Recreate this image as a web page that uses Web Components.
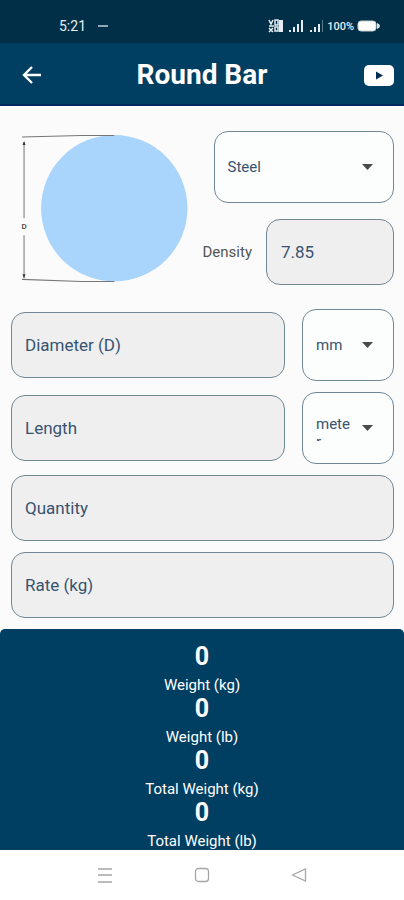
<!DOCTYPE html>
<html lang="en">
<head>
<meta charset="utf-8">
<meta name="viewport" content="width=device-width, initial-scale=1">
<title>Round Bar</title>
<style>
  body {
    margin: 0;
    font-family: Roboto, "Liberation Sans", sans-serif;
    --navy: #003e62;
    --line: #6f8796;
    --text: #38536f;
  }
</style>
</head>
<body>
<round-bar-screen></round-bar-screen>

<script>
function attach(element, html) {
  const template = document.createElement('template');
  template.innerHTML = html;
  const root = element.attachShadow({ mode: 'open' });
  root.appendChild(document.importNode(template.content, true));
  return root;
}

class StatusBar extends HTMLElement {
  constructor() {
    super();
    attach(this, `
      <style>
        :host {
          display: flex;
          align-items: center;
          justify-content: space-between;
          height: 43px;
          padding: 9px 24px 0 59px;
          box-sizing: border-box;
          background: #002f47;
          color: #e6edf1;
          font-size: 14px;
        }
        div { display: flex; align-items: center; }
        .left { gap: 12px; }
        .battery { font-size: 11px; font-weight: 500; gap: 3px; }
        .dash { width: 10px; height: 2px; background: #91a7b3; }
        svg { display: block; }
      </style>
      <div class="left"><span>5:21</span><span class="dash"></span></div>
      <div class="battery">
        <svg width="56" height="14" viewBox="0 0 56 14" fill="#e6edf1">
          <path d="M1 1l2 4 2-4M1 7h5M1 9l4 4M5 9l-4 4M7 1h3v5H7zM7 8h3v4H7z" fill="none" stroke="#e6edf1" stroke-width="1.500"/>
          <rect x="11" y="1" width="4" height="12"/>
          <path d="M21 11h2v2h-2zM25 8h2v5h-2zM29 5h2v8h-2zM33 1h2v12h-2z"/>
          <path d="M42 11h2v2h-2zM46 8h2v5h-2zM50 5h2v8h-2z"/>
          <path d="M54 1h1v12h-1z" opacity=".4"/>
        </svg>
        <span>100%</span>
        <svg width="23" height="12" viewBox="0 0 23 12">
          <rect x="1" y="1" width="18" height="10" rx="3" fill="#fff" stroke="#c5ced3"/>
          <path d="M20 3q3 1 3 3t-3 3z" fill="#dce3e6"/>
        </svg>
      </div>
    `);
  }
}

class AppBar extends HTMLElement {
  constructor() {
    super();
    attach(this, `
      <style>
        :host {
          display: grid;
          grid-template-columns: 1fr auto 1fr;
          align-items: center;
          height: 63px;
          padding: 2px 9px 0;
          box-sizing: border-box;
          background: var(--navy);
          border-bottom: 2px solid #00285a;
          color: #fff;
        }
        h1 { margin: 0; font-size: 28px; font-weight: 700; }
        button {
          display: flex;
          padding: 0;
          border: 0;
          background: none;
        }
        .back { justify-self: start; padding-left: 9px; }
        .video { justify-self: end; }
      </style>
      <button class="back" aria-label="Back">
        <svg width="28" height="28" viewBox="0 0 28 28" fill="none" stroke="#fff" stroke-width="2.400">
          <path d="M23 14H7M14 6l-8 8 8 8"/>
        </svg>
      </button>
      <h1><slot></slot></h1>
      <button class="video" aria-label="Watch video">
        <svg width="32" height="26" viewBox="0 0 32 26">
          <rect x="1" y="3" width="30" height="21" rx="5" fill="#fff"/>
          <path d="M13 9.500v8l7-4z" fill="#002c50"/>
        </svg>
      </button>
    `);
  }
}

class BarDiagram extends HTMLElement {
  constructor() {
    super();
    attach(this, `
      <style>
        :host { display: block; }
        svg { display: block; width: 100%; }
      </style>
      <svg viewBox="0 0 191 154" role="img" aria-label="Round bar with diameter D">
        <circle cx="103" cy="77" r="73" fill="#a9d4fc"/>
        <g stroke="#777" fill="none">
          <path d="M11 6L70 4.500H103M11 148l59 2h33"/>
          <path d="M13 11v76M13 104v43"/>
        </g>
        <path d="M11.500 14l1.500-4 1.500 4zM11.500 143l1.500 4 1.500-4z" fill="#333"/>
        <text x="13" y="98" font-size="8" font-weight="500" text-anchor="middle" fill="#444">D</text>
      </svg>
    `);
  }
}

class TextField extends HTMLElement {
  constructor() {
    super();
    const root = attach(this, `
      <style>
        :host { display: block; flex: 1; min-width: 0; color: var(--text); font-size: 17px; }
        .field { display: grid; align-items: center; }
        label, input { grid-area: 1 / 1; }
        label { z-index: 1; padding-left: 14px; pointer-events: none; }
        input:not(:placeholder-shown) + label { visibility: hidden; }
        input {
          width: 100%;
          height: 66px;
          padding: 0 14px;
          box-sizing: border-box;
          border: 1px solid var(--line);
          border-radius: 14px;
          background: #efefef;
          color: inherit;
          font: inherit;
        }
        :host([outside]) .field { display: flex; gap: 14px; }
        :host([outside]) label {
          order: -1;
          padding: 0;
          color: #555;
          font-size: 15px;
          visibility: visible !important;
        }
        :host([outside]) input { flex: 1; min-width: 0; }
      </style>
      <div class="field">
        <input id="input" type="text" inputmode="decimal" placeholder=" ">
        <label for="input"></label>
      </div>
    `);
    root.querySelector('label').textContent = this.getAttribute('label');
    root.querySelector('input').value = this.getAttribute('value') || '';
  }
}

class DropDown extends HTMLElement {
  constructor() {
    super();
    const root = attach(this, `
      <style>
        :host { display: grid; color: var(--text); font-size: 15px; }
        select, .face { grid-area: 1 / 1; }
        select {
          appearance: none;
          width: 100%;
          height: 72px;
          padding: 0 14px;
          border: 1px solid var(--line);
          border-radius: 14px;
          background: #fcfdfd;
          color: transparent;
          font: inherit;
        }
        option { color: #38536f; }
        .face {
          display: flex;
          align-items: center;
          padding: 0 15px 0 14px;
          pointer-events: none;
        }
        .value {
          flex: 1;
          max-height: 26px;
          overflow: hidden;
          line-height: 18px;
          word-break: break-all;
        }
      </style>
      <select></select>
      <div class="face" aria-hidden="true">
        <span class="value"></span>
        <svg width="24" height="24" viewBox="0 0 24 24"><path d="M7 9h11l-5.500 6z" fill="#4a4a4a"/></svg>
      </div>
    `);
    const select = root.querySelector('select');
    const value = root.querySelector('.value');
    select.setAttribute('aria-label', this.getAttribute('label'));
    this.getAttribute('options').split(',').forEach((name) => {
      select.add(new Option(name));
    });
    value.textContent = select.value;
    select.addEventListener('change', () => {
      value.textContent = select.value;
    });
  }
}

class ResultRow extends HTMLElement {
  constructor() {
    super();
    attach(this, `
      <style>
        :host {
          display: flex;
          flex-direction: column;
          align-items: center;
          gap: 5px;
        }
        .value { font-size: 25px; font-weight: 700; line-height: 29px; }
        .label { font-size: 15px; line-height: 18px; }
      </style>
      <span class="value"><slot name="value"></slot></span>
      <span class="label"><slot></slot></span>
    `);
  }
}

class NavBar extends HTMLElement {
  constructor() {
    super();
    attach(this, `
      <style>
        :host {
          display: grid;
          grid-template-columns: repeat(3, 1fr);
          align-items: center;
          justify-items: center;
          height: 50px;
          padding: 0 14%;
          background: #fff;
        }
        button { display: flex; padding: 0; border: 0; background: none; }
        svg { fill: none; stroke: #a5a5a5; stroke-width: 1.300; }
      </style>
      <button aria-label="Recent apps">
        <svg width="16" height="16" viewBox="0 0 16 16"><path d="M1 2h14M1 8h14M1 15h14"/></svg>
      </button>
      <button aria-label="Home">
        <svg width="16" height="16" viewBox="0 0 16 16"><rect x="1.500" y="1.500" width="13" height="13" rx="3"/></svg>
      </button>
      <button aria-label="Go back">
        <svg width="16" height="16" viewBox="0 0 16 16"><path d="M14.500 2v12L1.500 8z"/></svg>
      </button>
    `);
  }
}

class RoundBarScreen extends HTMLElement {
  constructor() {
    super();
    attach(this, `
      <style>
        :host {
          display: flex;
          flex-direction: column;
          height: 100vh;
          background: #fbfbfb;
        }
        main {
          display: flex;
          flex-direction: column;
          gap: 11px;
          padding: 25px 10px 11px 11px;
        }
        .top {
          display: grid;
          grid-template-columns: 1fr 1fr;
          margin-bottom: 13px;
        }
        .material { display: flex; flex-direction: column; gap: 16px; }
        .material drop-down { margin-left: 11px; }
        .material text-field { flex: none; }
        .row { display: flex; align-items: center; gap: 17px; }
        .row drop-down { width: 92px; }
        .results {
          flex: 1;
          min-height: 0;
          overflow: hidden;
          padding-top: 13px;
          box-sizing: border-box;
          border-radius: 5px 5px 0 0;
          background: var(--navy);
          color: #fff;
        }
      </style>
      <status-bar></status-bar>
      <app-bar>Round Bar</app-bar>
      <main>
        <div class="top">
          <bar-diagram></bar-diagram>
          <div class="material">
            <drop-down label="Material" options="Steel"></drop-down>
            <text-field label="Density" value="7.85" outside></text-field>
          </div>
        </div>
        <div class="row">
          <text-field label="Diameter (D)"></text-field>
          <drop-down label="Diameter unit" options="mm"></drop-down>
        </div>
        <div class="row">
          <text-field label="Length"></text-field>
          <drop-down label="Length unit" options="meter"></drop-down>
        </div>
        <text-field label="Quantity"></text-field>
        <text-field label="Rate (kg)"></text-field>
      </main>
      <section class="results">
        <result-row><span slot="value">0</span>Weight (kg)</result-row>
        <result-row><span slot="value">0</span>Weight (lb)</result-row>
        <result-row><span slot="value">0</span>Total Weight (kg)</result-row>
        <result-row><span slot="value">0</span>Total Weight (lb)</result-row>
      </section>
      <nav-bar></nav-bar>
    `);
  }
}

customElements.define('status-bar', StatusBar);
customElements.define('app-bar', AppBar);
customElements.define('bar-diagram', BarDiagram);
customElements.define('text-field', TextField);
customElements.define('drop-down', DropDown);
customElements.define('result-row', ResultRow);
customElements.define('nav-bar', NavBar);
customElements.define('round-bar-screen', RoundBarScreen);
</script>
</body>
</html>
